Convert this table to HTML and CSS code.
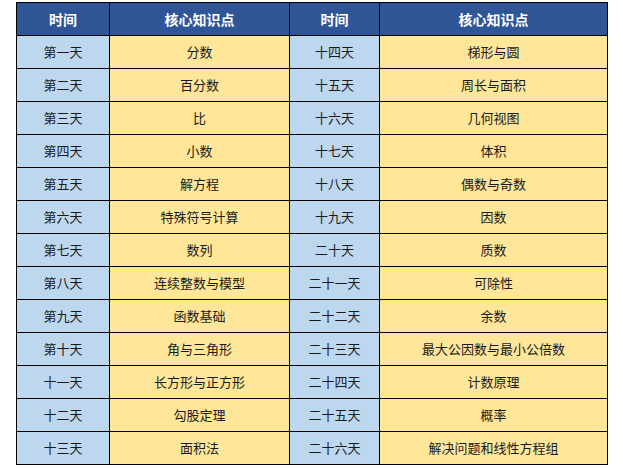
FILE: index.html
```html
<!DOCTYPE html>
<html lang="zh">
<head>
<meta charset="utf-8">
<link rel="stylesheet" href="styles.css">
</head>
<body>
<div class="wrap">
<table class="plan">
<colgroup><col class="c1"><col class="c2"><col class="c3"><col class="c4"></colgroup>
<thead>
<tr><th>时间</th><th>核心知识点</th><th>时间</th><th>核心知识点</th></tr>
</thead>
<tbody>
<tr><td class="day">第一天</td><td class="topic">分数</td><td class="day">十四天</td><td class="topic">梯形与圆</td></tr>
<tr><td class="day">第二天</td><td class="topic">百分数</td><td class="day">十五天</td><td class="topic">周长与面积</td></tr>
<tr><td class="day">第三天</td><td class="topic">比</td><td class="day">十六天</td><td class="topic">几何视图</td></tr>
<tr><td class="day">第四天</td><td class="topic">小数</td><td class="day">十七天</td><td class="topic">体积</td></tr>
<tr><td class="day">第五天</td><td class="topic">解方程</td><td class="day">十八天</td><td class="topic">偶数与奇数</td></tr>
<tr><td class="day">第六天</td><td class="topic">特殊符号计算</td><td class="day">十九天</td><td class="topic">因数</td></tr>
<tr><td class="day">第七天</td><td class="topic">数列</td><td class="day">二十天</td><td class="topic">质数</td></tr>
<tr><td class="day">第八天</td><td class="topic">连续整数与模型</td><td class="day">二十一天</td><td class="topic">可除性</td></tr>
<tr><td class="day">第九天</td><td class="topic">函数基础</td><td class="day">二十二天</td><td class="topic">余数</td></tr>
<tr><td class="day">第十天</td><td class="topic">角与三角形</td><td class="day">二十三天</td><td class="topic">最大公因数与最小公倍数</td></tr>
<tr><td class="day">十一天</td><td class="topic">长方形与正方形</td><td class="day">二十四天</td><td class="topic">计数原理</td></tr>
<tr><td class="day">十二天</td><td class="topic">勾股定理</td><td class="day">二十五天</td><td class="topic">概率</td></tr>
<tr><td class="day">十三天</td><td class="topic">面积法</td><td class="day">二十六天</td><td class="topic">解决问题和线性方程组</td></tr>
</tbody>
</table>
</div>
</body>
</html>
```
FILE: styles.css
```css
html, body {
  margin: 0;
  padding: 0;
  background: #ffffff;
}
.wrap {
  padding: 2px 0 0 16px;
}
.plan {
  border-collapse: collapse;
  table-layout: fixed;
  width: 591px;
  font-family: "Microsoft YaHei", "Noto Sans CJK SC", sans-serif;
  font-size: 13px;
  color: #1a1a1a;
}
.c1 { width: 93px; }
.c2 { width: 180px; }
.c3 { width: 90px; }
.c4 { width: 228px; }
.plan th, .plan td {
  border: 1px solid #000;
  height: 32px;
  padding: 0;
  text-align: center;
  vertical-align: middle;
  line-height: 16px;
}
.plan th {
  background: #2f5597;
  color: #ffffff;
  font-size: 14px;
  font-weight: bold;
}
.day {
  background: #bdd7ee;
}
.topic {
  background: #ffe699;
}
```
